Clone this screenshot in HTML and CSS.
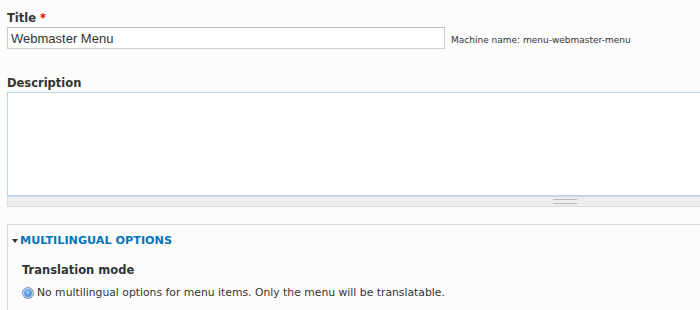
FILE: index.html
```html
<!DOCTYPE html>
<html lang="en">
<head>
    <meta charset="UTF-8">
    <title>Edit menu</title>
    <link rel="stylesheet" href="styles.css">
</head>
<body>
    <form class="menu-form">
        <div class="form-item title-item">
            <label class="form-label" for="edit-title">Title <span class="required">*</span></label>
            <div class="field-row">
                <input class="form-text" id="edit-title" type="text" value="Webmaster Menu">
                <span class="machine-name">Machine name: menu-webmaster-menu</span>
            </div>
        </div>

        <div class="form-item">
            <label class="form-label" for="edit-description">Description</label>
            <div class="resizable">
                <textarea class="form-textarea" id="edit-description"></textarea>
                <div class="grippie"><span class="grip"></span></div>
            </div>
        </div>

        <fieldset class="fieldset">
            <legend class="fieldset-legend">
                <span class="arrow"></span>
                <a href="#" class="fieldset-title">Multilingual options</a>
            </legend>
            <div class="fieldset-wrapper">
                <div class="form-label">Translation mode</div>
                <label class="radio-row">
                    <span class="radio"></span>
                    No multilingual options for menu items. Only the menu will be translatable.
                </label>
            </div>
        </fieldset>
    </form>
</body>
</html>
```

FILE: styles.css
```css
body {
    margin: 0;
    background: #fcfcfc;
    color: #333;
    font-family: "DejaVu Sans", Verdana, sans-serif;
    font-size: 13px;
    overflow: hidden;
}
.menu-form {
    width: 1116px;
    padding: 11px 0 0 7px;
}
.form-item {
    margin-bottom: 13px;
}
.title-item {
    margin-bottom: 27px;
}
.form-label {
    display: block;
    font-weight: bold;
    font-size: 11.5px;
    line-height: 14px;
    margin-bottom: 2px;
}
.required {
    color: #e00;
}
.field-row {
    display: flex;
    align-items: center;
    gap: 6px;
}
.form-text {
    box-sizing: border-box;
    width: 438px;
    height: 22px;
    margin: 0;
    padding: 2px 3px;
    border: 1px solid #ccc;
    border-top-color: #bbb;
    border-radius: 0;
    background: #fff;
    color: #333;
    font-family: "Liberation Sans", Arial, sans-serif;
    font-size: 13px;
}
.machine-name {
    font-size: 9px;
    color: #333;
    padding-top: 3px;
}
.resizable {
    margin-top: 1px;
}
.form-textarea {
    display: block;
    box-sizing: border-box;
    width: 100%;
    height: 104px;
    margin: 0;
    border: 1px solid #bcd2ec;
    background: #fff;
    resize: none;
}
.grippie {
    height: 9px;
    background: #ededed;
    border: 1px solid #ddd;
    border-top: 1px solid #cbdcee;
    display: flex;
    justify-content: center;
    align-items: center;
}
.grip {
    width: 24px;
    height: 3px;
    border-top: 1px solid #bbb;
    border-bottom: 1px solid #bbb;
}
.fieldset {
    margin: 17px 0 0 0;
    padding: 0;
    border: 1px solid #ddd;
    border-bottom: none;
    position: relative;
    height: 100px;
}
.fieldset-legend {
    position: absolute;
    top: 9px;
    left: 4px;
    padding: 0;
    display: flex;
    align-items: center;
    gap: 2px;
}
.arrow {
    width: 0;
    height: 0;
    border-left: 3px solid transparent;
    border-right: 3px solid transparent;
    border-top: 4px solid #333;
}
.fieldset-title {
    color: #0074bd;
    font-weight: bold;
    font-size: 11.2px;
    text-transform: uppercase;
    text-decoration: none;
}
.fieldset-wrapper {
    padding: 38px 0 0 14px;
}
.fieldset-wrapper .form-label {
    margin-bottom: 9px;
}
.radio-row {
    display: flex;
    align-items: center;
    gap: 3px;
    font-size: 10.8px;
}
.radio {
    box-sizing: border-box;
    width: 12px;
    height: 12px;
    border-radius: 50%;
    border: 1px solid #8a9cb4;
    background: radial-gradient(circle at 45% 40%, #9fc8f5 0, #4a8be0 55%, #2f6cc4 100%);
    box-shadow: inset 0 0 0 1px #dfe9f6;
}
```
